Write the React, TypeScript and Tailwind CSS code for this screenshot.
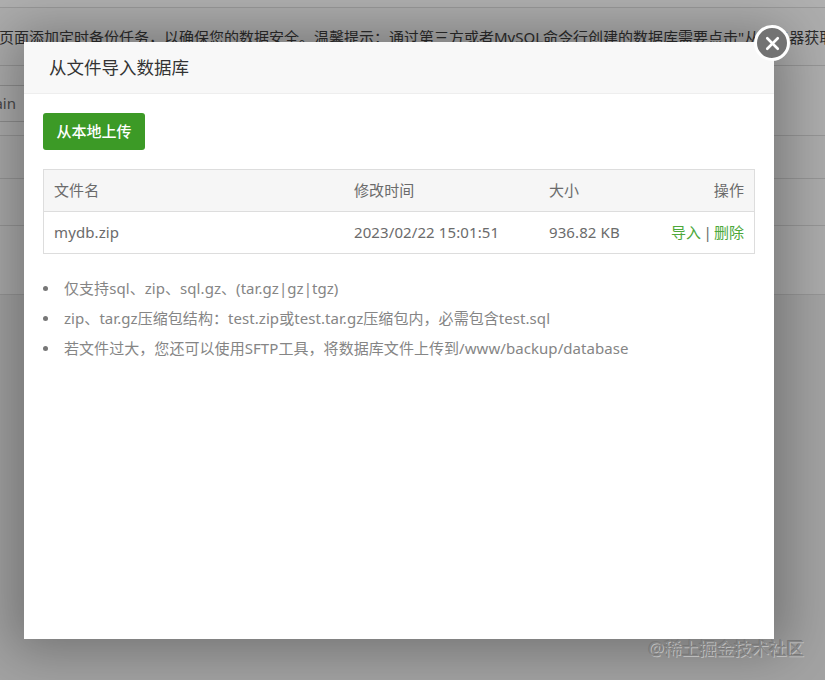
import { X } from "lucide-react";

const font = "font-['Noto_Sans','Noto_Sans_CJK_SC',sans-serif]";

const files = [{ name: "mydb.zip", time: "2023/02/22 15:01:51", size: "936.82 KB" }];

const tips = [
  "仅支持sql、zip、sql.gz、(tar.gz|gz|tgz)",
  "zip、tar.gz压缩包结构：test.zip或test.tar.gz压缩包内，必需包含test.sql",
  "若文件过大，您还可以使用SFTP工具，将数据库文件上传到/www/backup/database",
];

function PageBehind() {
  return (
    <div className="flex h-[680px] flex-col overflow-hidden bg-[#a6a6a6] text-[15px] text-[#2c2c2c]">
      <div className="h-2 shrink-0 border-b border-[#999] bg-[#b0b0b0]" />
      <div className="flex h-[58px] shrink-0 items-start whitespace-nowrap border-b border-[#969696] bg-[#adadad] pt-[18px]">
        <span className="-ml-[1px] leading-[22px]">
          页面添加定时备份任务，以确保您的数据安全。温馨提示：通过第三方或者MySQL命令行创建的数据库需要点击"从服务器获取
        </span>
      </div>
      <div className="h-[70px] shrink-0 border-b border-[#969696] bg-[#adadad] pt-[19px]">
        <div className="flex h-[37px] w-[40px] items-center justify-end whitespace-nowrap border-y border-[#8f8f8f] pr-6 text-[#4a4a4a]">
          <span className="shrink-0">main</span>
        </div>
      </div>
      <div className="h-[43px] shrink-0 border-b border-[#969696] bg-[#ababab]" />
      <div className="h-[47px] shrink-0 border-b border-[#969696] bg-[#ababab]" />
      <div className="h-[69px] shrink-0 border-b border-[#969696] bg-[#ababab]" />
      <div className="flex-1 bg-[#a3a3a3]" />
    </div>
  );
}

function ImportDialog() {
  return (
    <div className="absolute left-6 top-[42px] flex h-[597px] w-[750px] flex-col bg-white shadow-[0_0_50px_12px_rgba(0,0,0,0.3)]">
      <button className="absolute -right-[16px] -top-[17px] flex h-[36px] w-[36px] items-center justify-center rounded-full border-[3px] border-white bg-[#737373] text-white">
        <X size={21} strokeWidth={3} />
      </button>
      <div className="flex h-[52px] shrink-0 items-center border-b border-[#eeeeee] bg-[#f8f8f8] pl-[25px] text-[17.5px] text-[#333]">
        从文件导入数据库
      </div>
      <div className="flex flex-col px-[19px] pt-[19px]">
        <button className="h-[37px] w-[102px] rounded-[3px] bg-[#3c9a26] text-[15px] font-medium text-white">
          从本地上传
        </button>
        <div className="mt-[19px] w-[712px] border border-[#dddddd] text-[15px] tracking-[0.1px] text-[#6b6b6b]">
          <div className="grid h-[42px] grid-cols-[300px_195px_1fr_auto] items-center border-b border-[#dddddd] bg-[#f6f6f6] px-[10px]">
            <span>文件名</span>
            <span>修改时间</span>
            <span>大小</span>
            <span>操作</span>
          </div>
          {files.map((file) => (
            <div
              key={file.name}
              className="grid h-[41px] grid-cols-[300px_195px_1fr_auto] items-center px-[10px]"
            >
              <span>{file.name}</span>
              <span>{file.time}</span>
              <span>{file.size}</span>
              <span className="flex items-center gap-[5px] tracking-normal">
                <a className="text-[#4da83a]">导入</a>
                <span className="-mx-[2.5px] w-[8px] text-center">|</span>
                <a className="text-[#4da83a]">删除</a>
              </span>
            </div>
          ))}
        </div>
        <ul className="mt-[19px] text-[15px] leading-[30px] tracking-[0.06px] text-[#858585]">
          {tips.map((tip) => (
            <li key={tip} className="flex items-center gap-[16px]">
              <span className="h-[5px] w-[5px] shrink-0 rounded-full bg-[#777]" />
              <span>{tip}</span>
            </li>
          ))}
        </ul>
      </div>
    </div>
  );
}

export default function App() {
  return (
    <div className={`relative h-[680px] w-[825px] overflow-hidden ${font}`}>
      <PageBehind />
      <ImportDialog />
      <span className="absolute right-[21px] top-[635px] text-[17.5px] text-[#858585] [text-shadow:1px_1px_0_#bdbdbd,-1px_-1px_0_#777]">
        @稀土掘金技术社区
      </span>
    </div>
  );
}
